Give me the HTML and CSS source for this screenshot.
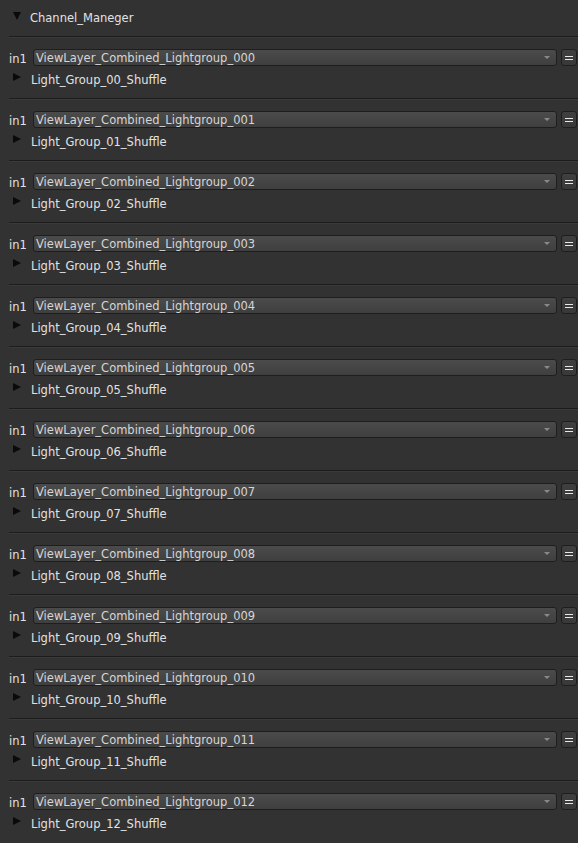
FILE: index.html
```html
<!DOCTYPE html>
<html>
<head>
<meta charset="utf-8">
<link rel="stylesheet" href="styles.css">
</head>
<body>
<div class="panel">
  <div class="header">
    <span class="tri-down"></span>
    <span class="title">Channel_Maneger</span>
  </div>
  <div id="list"></div>
</div>
<script>
const list = document.getElementById('list');
for (let i = 0; i <= 12; i++) {
  const n3 = String(i).padStart(3, '0');
  const n2 = String(i).padStart(2, '0');
  const sec = document.createElement('div');
  sec.className = 'section';
  sec.innerHTML =
    '<div class="in-row">' +
      '<span class="in-label">in1</span>' +
      '<div class="dropdown"><span class="dd-text">ViewLayer_Combined_Lightgroup_' + n3 + '</span><span class="dd-arrow"></span></div>' +
      '<div class="eq-btn"><span class="eq"></span></div>' +
    '</div>' +
    '<div class="shuffle-row">' +
      '<span class="tri-right"></span>' +
      '<span class="shuffle-label">Light_Group_' + n2 + '_Shuffle</span>' +
    '</div>';
  list.appendChild(sec);
}
</script>
</body>
</html>
```

FILE: styles.css
```css
html, body {
  margin: 0;
  padding: 0;
  background: #323232;
}
body {
  font-family: "DejaVu Sans", Verdana, sans-serif;
  font-size: 11.5px;
  color: #e2e2e2;
  width: 578px;
  height: 843px;
  overflow: hidden;
}
.panel {
  display: flex;
  flex-direction: column;
}
.header {
  height: 36px;
  display: flex;
  align-items: center;
  padding-left: 13px;
  box-sizing: border-box;
}
.tri-down {
  width: 0;
  height: 0;
  border-left: 4.5px solid transparent;
  border-right: 4.5px solid transparent;
  border-top: 8px solid #0a0a0a;
  margin-right: 9px;
  margin-top: -4px;
}
.title {
  line-height: 14px;
}
.section {
  margin-left: 9px;
  height: 62px;
  box-sizing: border-box;
  border-top: 1px solid #1c1c1c;
  box-shadow: inset 0 1px 0 #3a3a3a;
  display: flex;
  flex-direction: column;
}
.in-row {
  display: flex;
  align-items: center;
  margin-top: 12px;
  height: 17px;
}
.in-label {
  width: 24px;
  margin-left: -9px;
  padding-left: 9px;
  box-sizing: content-box;
  line-height: 14px;
  margin-top: 3px;
}
.dropdown {
  width: 524px;
  height: 17px;
  box-sizing: border-box;
  border: 1px solid #1e1e1e;
  border-radius: 3px;
  background: linear-gradient(#4b4b4b, #3f3f3f);
  display: flex;
  align-items: center;
  padding-left: 2px;
  position: relative;
  color: #d6d6d6;
}
.dd-text {
  line-height: 14px;
  margin-top: 1px;
}
.dd-arrow {
  position: absolute;
  right: 6px;
  top: 6px;
  width: 0;
  height: 0;
  border-left: 3px solid transparent;
  border-right: 3px solid transparent;
  border-top: 3px solid #8a8a8a;
}
.eq-btn {
  margin-left: 4px;
  width: 16px;
  height: 17px;
  box-sizing: border-box;
  border: 1px solid #1e1e1e;
  border-radius: 3px;
  background: linear-gradient(#404040, #383838);
  display: flex;
  align-items: center;
  justify-content: center;
}
.eq {
  width: 8px;
  height: 2px;
  border-top: 1px solid #e8e8e8;
  border-bottom: 1px solid #e8e8e8;
}
.shuffle-row {
  display: flex;
  align-items: center;
  margin-top: 6px;
  height: 14px;
  padding-left: 4px;
}
.tri-right {
  width: 0;
  height: 0;
  border-top: 4.5px solid transparent;
  border-bottom: 4.5px solid transparent;
  border-left: 8px solid #0a0a0a;
  margin-right: 10px;
  margin-top: -5px;
}
.shuffle-label {
  line-height: 14px;
  margin-top: 2px;
}
```
